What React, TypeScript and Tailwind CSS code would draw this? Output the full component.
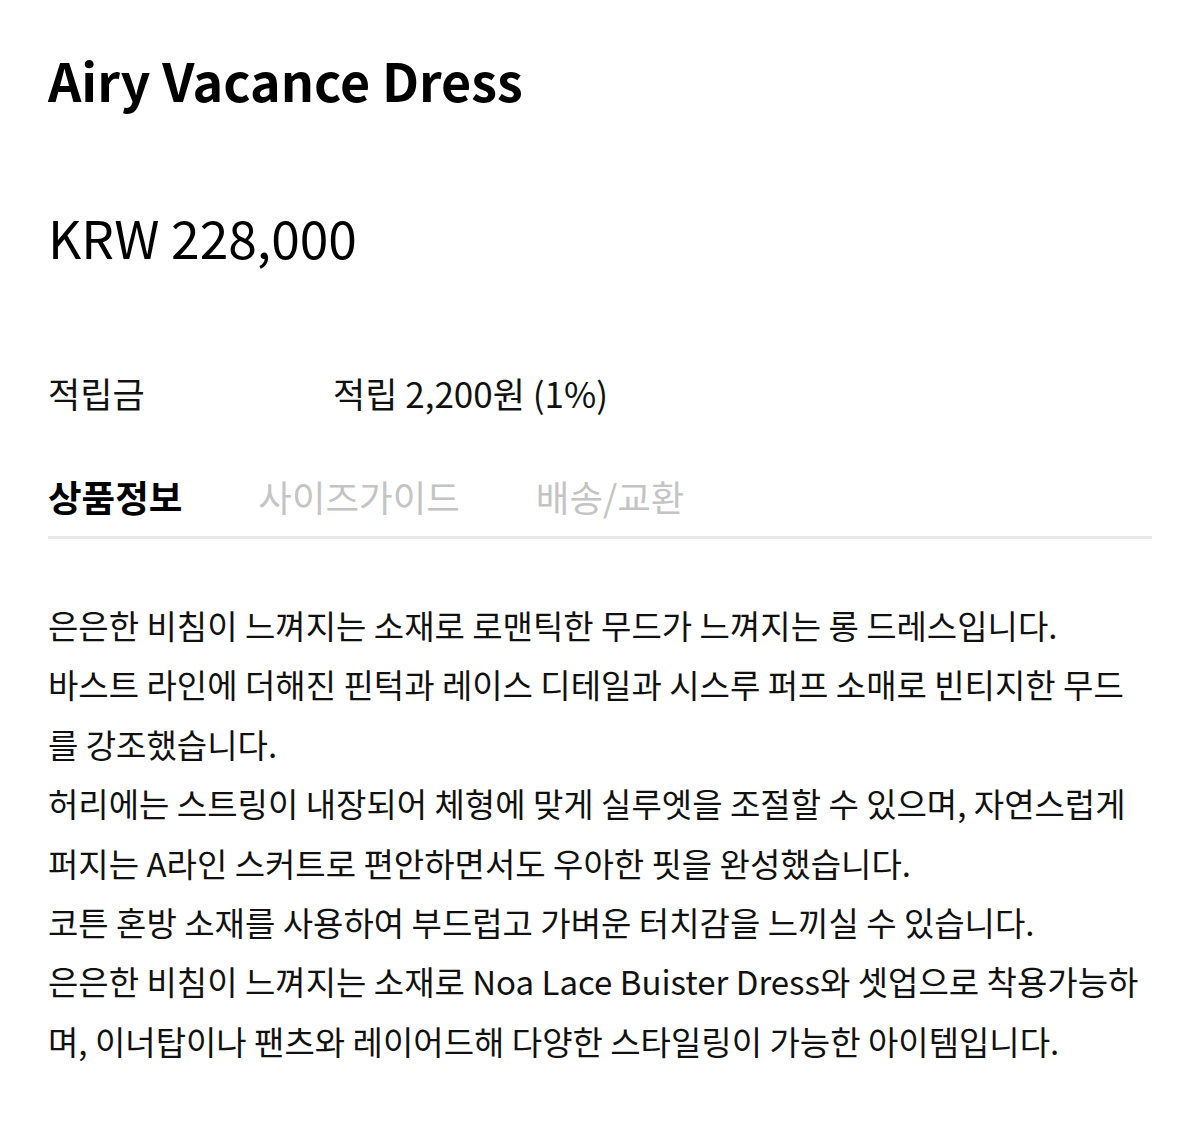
import React from "react";

const lines = [
  "은은한 비침이 느껴지는 소재로 로맨틱한 무드가 느껴지는 롱 드레스입니다.",
  "바스트 라인에 더해진 핀턱과 레이스 디테일과 시스루 퍼프 소매로 빈티지한 무드",
  "를 강조했습니다.",
  "허리에는 스트링이 내장되어 체형에 맞게 실루엣을 조절할 수 있으며, 자연스럽게",
  "퍼지는 A라인 스커트로 편안하면서도 우아한 핏을 완성했습니다.",
  "코튼 혼방 소재를 사용하여 부드럽고 가벼운 터치감을 느끼실 수 있습니다.",
  "은은한 비침이 느껴지는 소재로 Noa Lace Buister Dress와 셋업으로 착용가능하",
  "며, 이너탑이나 팬츠와 레이어드해 다양한 스타일링이 가능한 아이템입니다.",
];

export default function App() {
  return (
    <div
      className="w-[1200px] h-[1127px] bg-white text-[#111] px-[48px] overflow-hidden"
      style={{ fontFamily: '"Noto Sans CJK KR", "Noto Sans", sans-serif' }}
    >
      <h1 className="pt-[48px] text-[52px] font-bold leading-[64px] text-black">
        Airy Vacance Dress
      </h1>
      <div className="mt-[93px] text-[51.5px] leading-[64px] text-black">KRW 228,000</div>
      <div className="mt-[100px] flex text-[35px] leading-[48px]">
        <div className="w-[285px]">적립금</div>
        <div>적립 2,200원 (1%)</div>
      </div>
      <div className="mt-[56px] flex gap-[76px] text-[36.5px] leading-[48px] pb-[15px] border-b-[3px] border-[#e8e8e8]">
        <div className="font-bold text-black">상품정보</div>
        <div className="text-[#c4c4c4]">사이즈가이드</div>
        <div className="text-[#c4c4c4]">배송/교환</div>
      </div>
      <div className="mt-[57px] text-[33px] leading-[59.4px]">
        {lines.map((l, i) => (
          <div key={i} className="whitespace-nowrap">
            {l}
          </div>
        ))}
      </div>
    </div>
  );
}
